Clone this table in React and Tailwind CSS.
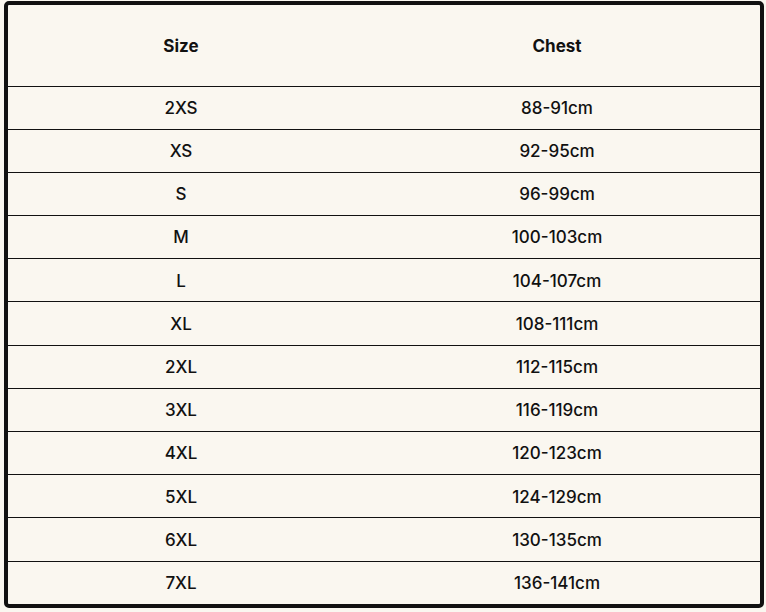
import React from 'react';

const rows = [
    ['2XS', '88-91cm'],
    ['XS', '92-95cm'],
    ['S', '96-99cm'],
    ['M', '100-103cm'],
    ['L', '104-107cm'],
    ['XL', '108-111cm'],
    ['2XL', '112-115cm'],
    ['3XL', '116-119cm'],
    ['4XL', '120-123cm'],
    ['5XL', '124-129cm'],
    ['6XL', '130-135cm'],
    ['7XL', '136-141cm'],
];

const SizeChart = () => {
    return (
        <div className="min-h-[612px] w-[766px] bg-[#faf7f0] pt-px pl-1 text-[#111] font-['Inter','Noto_Sans',sans-serif]">
            <div className="w-[760px] h-[607px] border-4 border-[#111] rounded-[5px] overflow-hidden">
                <table className="w-full border-collapse table-fixed">
                    <colgroup>
                        <col className="w-[346px]" />
                        <col />
                    </colgroup>
                    <thead>
                        <tr className="h-[81px] border-b border-[#111]">
                            <th className="pt-0.5 text-[17px] font-bold text-center">Size</th>
                            <th className="pt-0.5 text-[17px] font-bold text-center">Chest</th>
                        </tr>
                    </thead>
                    <tbody>
                        {rows.map((row, index) => (
                            <tr
                                key={index}
                                className={index < rows.length - 1 ? 'h-[43.2px] border-b border-[#111]' : 'h-[42px]'}
                            >
                                <td className="pt-0.5 text-[17px] font-medium text-center">{row[0]}</td>
                                <td className="pt-0.5 text-[17px] font-medium text-center">{row[1]}</td>
                            </tr>
                        ))}
                    </tbody>
                </table>
            </div>
        </div>
    );
};

export default SizeChart;
